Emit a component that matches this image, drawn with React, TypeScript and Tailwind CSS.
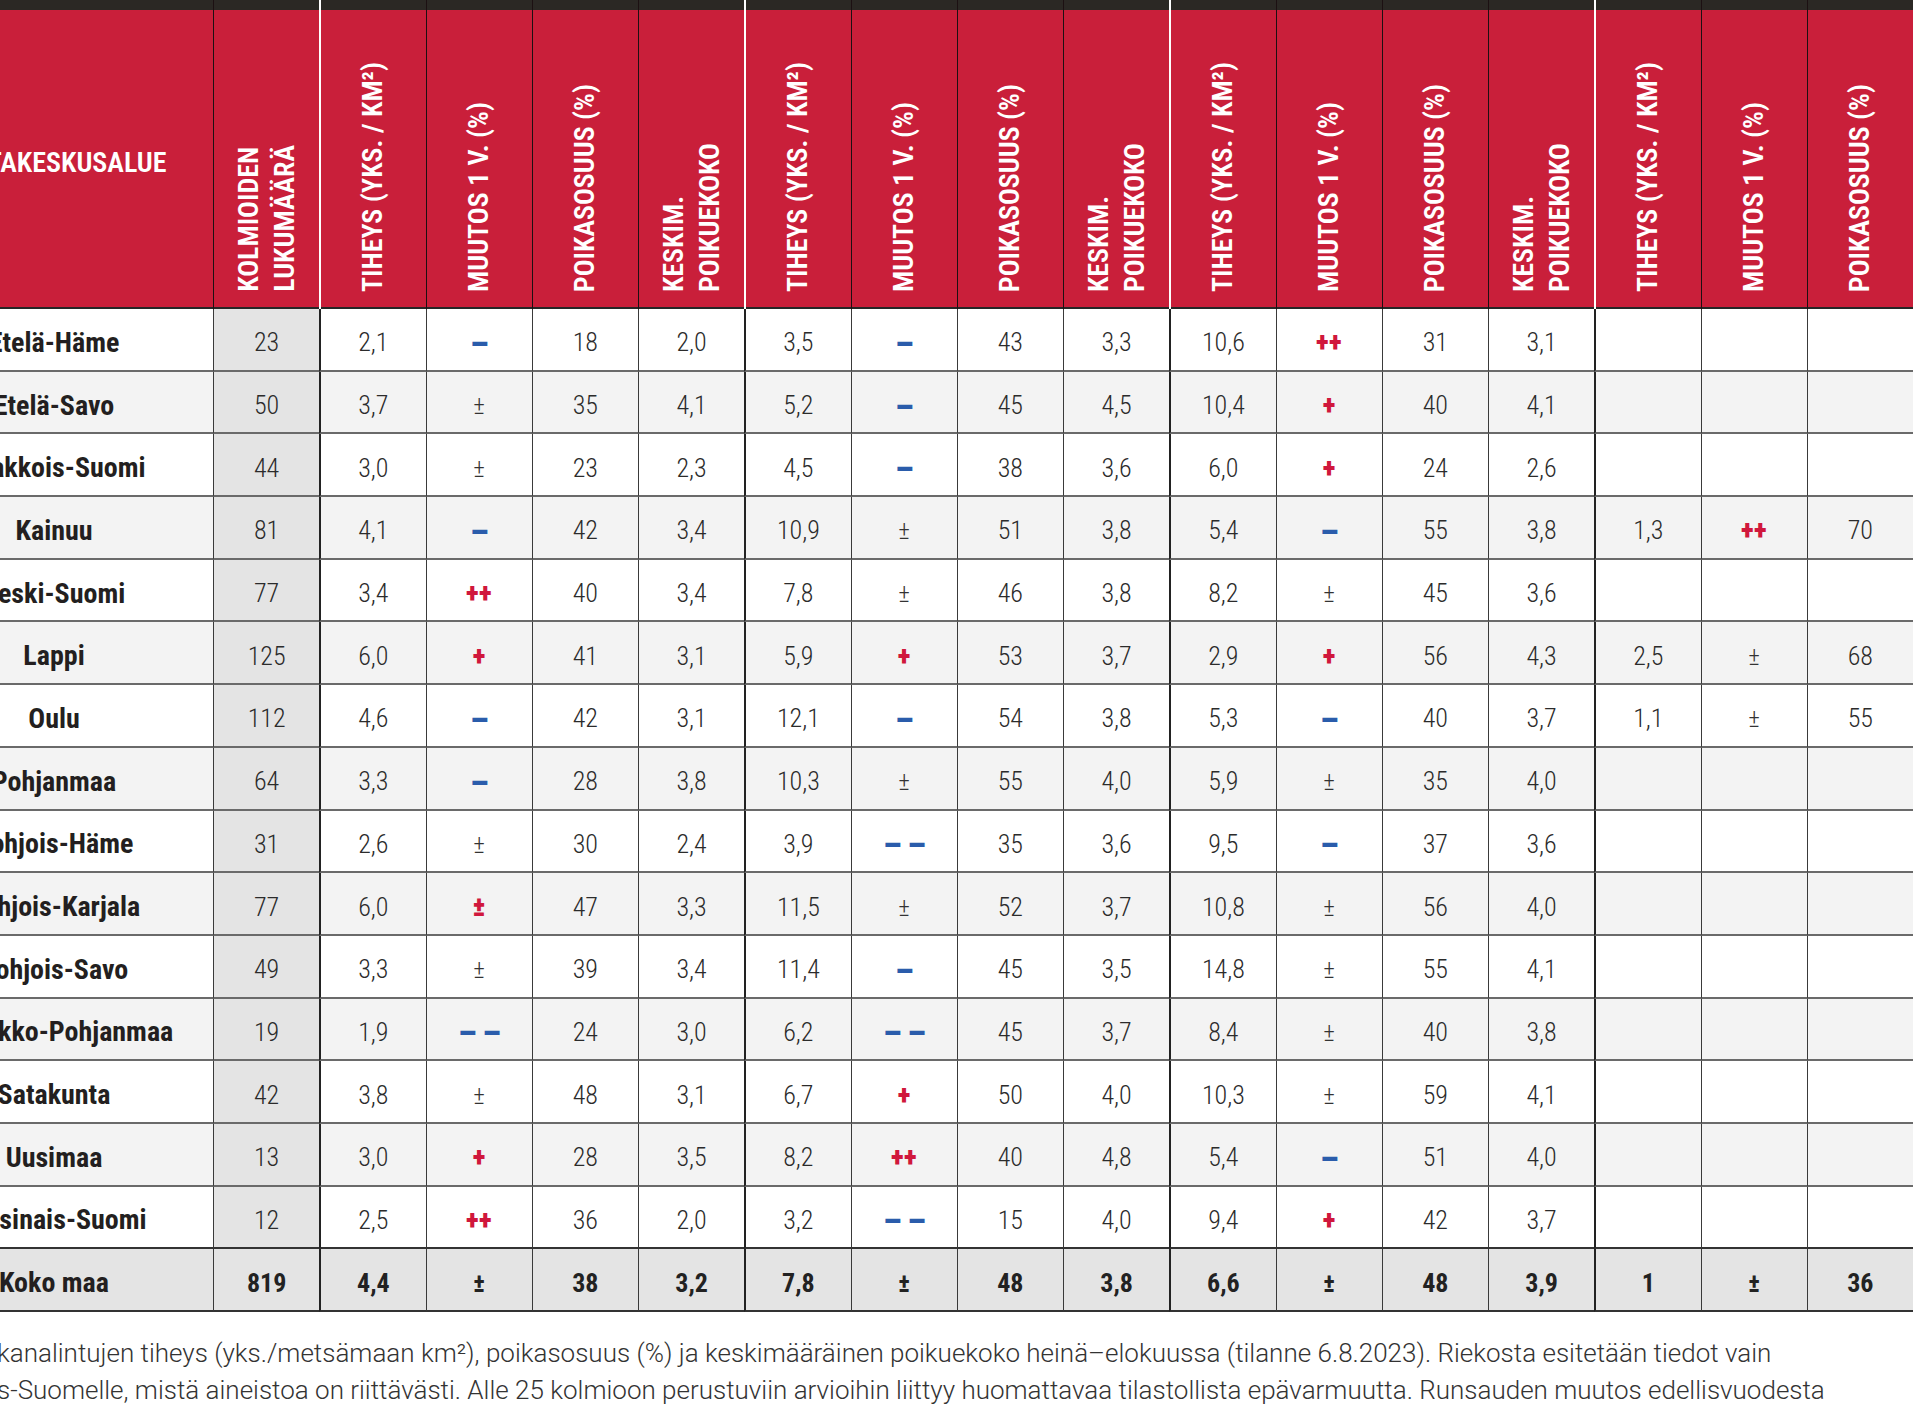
import React from 'react';
import clsx from 'clsx';

type Row = { name: string; count: string; vals: string[] };

// vals: 3 full groups (tiheys, muutos, poikasosuus, poikuekoko) + last group (tiheys, muutos, poikasosuus)
const rows: Row[] = [
  { name: 'Etelä-Häme', count: '23', vals: ['2,1', '-', '18', '2,0', '3,5', '-', '43', '3,3', '10,6', '++', '31', '3,1', '', '', ''] },
  { name: 'Etelä-Savo', count: '50', vals: ['3,7', '±', '35', '4,1', '5,2', '-', '45', '4,5', '10,4', '+', '40', '4,1', '', '', ''] },
  { name: 'Kaakkois-Suomi', count: '44', vals: ['3,0', '±', '23', '2,3', '4,5', '-', '38', '3,6', '6,0', '+', '24', '2,6', '', '', ''] },
  { name: 'Kainuu', count: '81', vals: ['4,1', '-', '42', '3,4', '10,9', '±', '51', '3,8', '5,4', '-', '55', '3,8', '1,3', '++', '70'] },
  { name: 'Keski-Suomi', count: '77', vals: ['3,4', '++', '40', '3,4', '7,8', '±', '46', '3,8', '8,2', '±', '45', '3,6', '', '', ''] },
  { name: 'Lappi', count: '125', vals: ['6,0', '+', '41', '3,1', '5,9', '+', '53', '3,7', '2,9', '+', '56', '4,3', '2,5', '±', '68'] },
  { name: 'Oulu', count: '112', vals: ['4,6', '-', '42', '3,1', '12,1', '-', '54', '3,8', '5,3', '-', '40', '3,7', '1,1', '±', '55'] },
  { name: 'Pohjanmaa', count: '64', vals: ['3,3', '-', '28', '3,8', '10,3', '±', '55', '4,0', '5,9', '±', '35', '4,0', '', '', ''] },
  { name: 'Pohjois-Häme', count: '31', vals: ['2,6', '±', '30', '2,4', '3,9', '--', '35', '3,6', '9,5', '-', '37', '3,6', '', '', ''] },
  { name: 'Pohjois-Karjala', count: '77', vals: ['6,0', '±!', '47', '3,3', '11,5', '±', '52', '3,7', '10,8', '±', '56', '4,0', '', '', ''] },
  { name: 'Pohjois-Savo', count: '49', vals: ['3,3', '±', '39', '3,4', '11,4', '-', '45', '3,5', '14,8', '±', '55', '4,1', '', '', ''] },
  { name: 'Rannikko-Pohjanmaa', count: '19', vals: ['1,9', '--', '24', '3,0', '6,2', '--', '45', '3,7', '8,4', '±', '40', '3,8', '', '', ''] },
  { name: 'Satakunta', count: '42', vals: ['3,8', '±', '48', '3,1', '6,7', '+', '50', '4,0', '10,3', '±', '59', '4,1', '', '', ''] },
  { name: 'Uusimaa', count: '13', vals: ['3,0', '+', '28', '3,5', '8,2', '++', '40', '4,8', '5,4', '-', '51', '4,0', '', '', ''] },
  { name: 'Varsinais-Suomi', count: '12', vals: ['2,5', '++', '36', '2,0', '3,2', '--', '15', '4,0', '9,4', '+', '42', '3,7', '', '', ''] },
];

const total: Row = {
  name: 'Koko maa',
  count: '819',
  vals: ['4,4', '±', '38', '3,2', '7,8', '±', '48', '3,8', '6,6', '±', '48', '3,9', '1', '±', '36'],
};

const groupLabels: string[][] = [
  ['TIHEYS (YKS. / KM²)'],
  ['MUUTOS 1 V. (%)'],
  ['POIKASOSUUS (%)'],
  ['KESKIM.', 'POIKUEKOKO'],
];

const headerCols: string[][] = [
  ['KOLMIOIDEN', 'LUKUMÄÄRÄ'],
  ...groupLabels,
  ...groupLabels,
  ...groupLabels,
  ...groupLabels.slice(0, 3),
];

const groupStarts = new Set([2, 6, 10, 14]);

const Value = ({ v, bold }: { v: string; bold?: boolean }) => {
  switch (v) {
    case '-':
      return <span className="text-[34px] font-black leading-none text-[#2a5cab]">–</span>;
    case '--':
      return (
        <span className="flex gap-[6px] text-[34px] font-black leading-none text-[#2a5cab]">
          <span>–</span>
          <span>–</span>
        </span>
      );
    case '+':
      return <span className="text-[27px] font-black leading-none text-[#d0173c]">+</span>;
    case '++':
      return <span className="text-[27px] font-black leading-none tracking-[0.5px] text-[#d0173c]">++</span>;
    case '±!':
      return <span className="text-[27px] font-black leading-none text-[#d0173c]">±</span>;
    case '±':
      return (
        <span className={clsx('text-[25px] leading-none', bold ? 'font-bold text-[#222]' : 'font-light text-[#333]')}>±</span>
      );
    default:
      return <span className={clsx(bold ? 'font-bold text-[#222]' : 'font-light text-[#2b2b2b]')}>{v}</span>;
  }
};

const HeaderCell = ({ index }: { index: number }) => {
  const lines = headerCols[index - 1];
  return (
    <div
      className={clsx(
        'flex h-[309px] flex-col',
        groupStarts.has(index) ? 'border-l-2 border-white' : 'border-l border-[#1c1012]'
      )}
    >
      <div className="h-[10px] bg-[#2b2824]" />
      <div className="flex flex-1 items-end justify-center border-b-2 border-[#262626] bg-[#c91f3a] pb-[15px]">
        <div className="rotate-180 text-[28px] font-semibold leading-[36px] text-white [font-stretch:73%] [writing-mode:vertical-rl]">
          {lines.map((l) => (
            <div key={l}>{l}</div>
          ))}
        </div>
      </div>
    </div>
  );
};

const DataRow = ({ row, index, isTotal }: { row: Row; index: number; isTotal?: boolean }) => {
  const stripe = isTotal ? 'bg-[#e4e4e4]' : index % 2 === 0 ? 'bg-white' : 'bg-[#f3f3f3]';
  const bottom = isTotal || index === rows.length - 1 ? 'border-b-2 border-b-[#333]' : 'border-b-2 border-b-[#6a6a6a]';
  const cells = [row.count, ...row.vals];
  return (
    <>
      <div className={clsx('flex h-[62.7px] items-center justify-center pt-[7px] text-[28px] font-bold text-[#231f20]', stripe, bottom)}>
        {row.name}
      </div>
      {cells.map((c, i) => {
        const col = i + 1;
        return (
          <div
            key={col}
            className={clsx(
              'flex h-[62.7px] items-center justify-center pt-[7px] text-[26px]',
              col === 1 ? 'bg-[#e4e4e4]' : stripe,
              bottom,
              groupStarts.has(col) ? 'border-l-2 border-l-[#222]' : 'border-l border-l-[#3a3a3a]'
            )}
          >
            <Value v={c} bold={isTotal} />
          </div>
        );
      })}
    </>
  );
};

export default function App() {
  return (
    <div className="h-[1410px] w-[1914px] overflow-hidden bg-white [font-family:Roboto,'Liberation_Sans',sans-serif] [font-stretch:75%]">
      <div className="-ml-[105px] w-[2019px]">
        <div className="grid grid-cols-[318px_repeat(16,106.25px)]">
          {/* header */}
          <div className="flex h-[309px] flex-col">
            <div className="h-[10px] bg-[#2b2824]" />
            <div className="flex flex-1 items-center justify-center border-b-2 border-[#262626] bg-[#c91f3a] pt-[8px] text-[28px] font-semibold text-white">
              RIISTAKESKUSALUE
            </div>
          </div>
          {headerCols.map((_, i) => (
            <HeaderCell key={i} index={i + 1} />
          ))}

          {rows.map((r, i) => (
            <DataRow key={r.name} row={r} index={i} />
          ))}
          <DataRow row={total} index={rows.length} isTotal />
        </div>
      </div>

      {/* footnote */}
      <div className="-ml-[3px] pt-[23px] text-[26px] font-light leading-[37px] whitespace-nowrap text-[#333] [font-stretch:96%]">
        <div>kanalintujen tiheys (yks./metsämaan km²), poikasosuus (%) ja keskimääräinen poikuekoko heinä–elokuussa (tilanne 6.8.2023). Riekosta esitetään tiedot vain</div>
        <div>s-Suomelle, mistä aineistoa on riittävästi. Alle 25 kolmioon perustuviin arvioihin liittyy huomattavaa tilastollista epävarmuutta. Runsauden muutos edellisvuodesta</div>
      </div>
    </div>
  );
}
